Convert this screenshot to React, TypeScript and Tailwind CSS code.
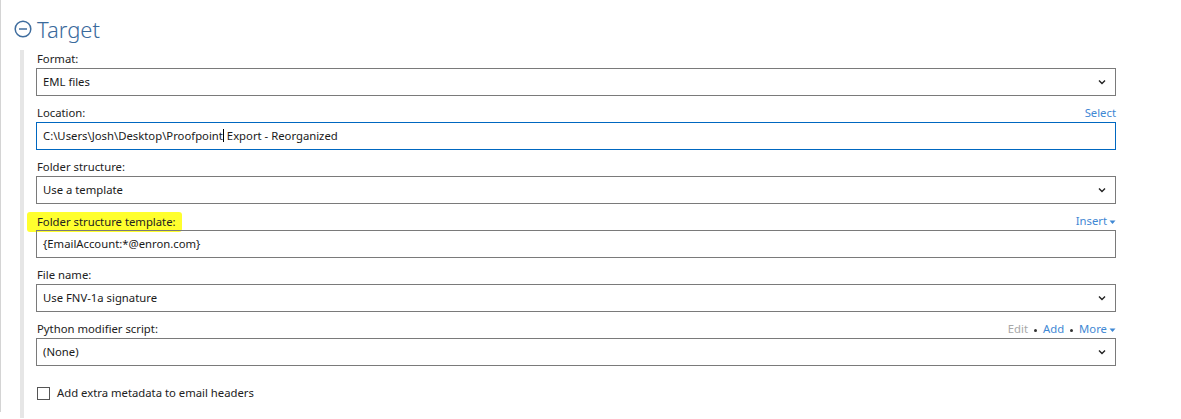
import React from "react";

/* ── Types ── */

type Field = {
  label: string;
  value: string;
  kind: "select" | "text";
  focused?: boolean;
  highlight?: boolean;
  actions?: React.ReactNode;
};

/* ── Small pieces ── */

function Chevron() {
  return (
    <svg width="8" height="6" viewBox="0 0 8 6" className="shrink-0">
      <path d="M1 1.5 L4 4.5 L7 1.5" fill="none" stroke="#222" strokeWidth="1.4" />
    </svg>
  );
}

function Caret() {
  return (
    <svg width="7" height="5" viewBox="0 0 7 5" className="ml-[2px] mt-[2px]">
      <path d="M0.5 0.5 H6.5 L3.5 4 Z" fill="#3f88d4" />
    </svg>
  );
}

function Dot() {
  return <span className="mx-[6px] mt-[1px] h-[3px] w-[3px] rounded-full bg-[#333]" />;
}

/* ── Data ── */

const FIELDS: Field[] = [
  { label: "Format:", value: "EML files", kind: "select" },
  {
    label: "Location:",
    value: "C:\\Users\\Josh\\Desktop\\Proofpoint Export - Reorganized",
    kind: "text",
    focused: true,
    actions: <span className="text-[#3f88d4]">Select</span>,
  },
  { label: "Folder structure:", value: "Use a template", kind: "select" },
  {
    label: "Folder structure template:",
    value: "{EmailAccount:*@enron.com}",
    kind: "text",
    highlight: true,
    actions: (
      <span className="flex items-center text-[#3f88d4]">
        Insert
        <Caret />
      </span>
    ),
  },
  { label: "File name:", value: "Use FNV-1a signature", kind: "select" },
  {
    label: "Python modifier script:",
    value: "(None)",
    kind: "select",
    actions: (
      <span className="flex items-center">
        <span className="text-[#a8a8a8]">Edit</span>
        <Dot />
        <span className="text-[#3f88d4]">Add</span>
        <Dot />
        <span className="text-[#3f88d4]">More</span>
        <Caret />
      </span>
    ),
  },
];

/* ── Field row ── */

function FieldRow({ field }: { field: Field }) {
  return (
    <div className="flex flex-col">
      <div className="flex h-[18px] items-center justify-between pl-[1px] pt-[1px]">
        {field.highlight ? (
          <span className="-ml-[10px] rounded-[3px] bg-[#ffff2e] py-[1px] pl-[10px] pr-[6px] leading-[18px]">
            {field.label}
          </span>
        ) : (
          <span>{field.label}</span>
        )}
        {field.actions}
      </div>
      <div
        className={
          "flex h-[28px] items-center justify-between border pl-[6px] pr-[9px] text-[#1a1a1a] " +
          (field.focused ? "border-[#0067c0]" : "border-[#7a7a7a]")
        }
      >
        <span className="whitespace-pre">
          {field.focused ? (
            <>
              C:\Users\Josh\Desktop\Proofpoint
              <span className="inline-block h-[13px] w-[1px] translate-y-[2px] bg-black" />
              {" Export - Reorganized"}
            </>
          ) : (
            field.value
          )}
        </span>
        {field.kind === "select" && <Chevron />}
      </div>
    </div>
  );
}

/* ── Main ── */

export default function App() {
  return (
    <div
      className="h-[419px] w-[1181px] overflow-hidden bg-white text-[11.3px] text-[#222]"
      style={{ fontFamily: '"Noto Sans", "Open Sans", sans-serif' }}
    >
      <div className="h-[412px] border-l border-[#d4d4d4]">
        {/* Heading */}
        <div className="flex h-[50px] items-center pl-[13px] pt-[7px]">
          <svg width="18" height="18" viewBox="0 0 18 18">
            <circle cx="9" cy="9" r="7.8" fill="none" stroke="#3f6d9e" strokeWidth="1.5" />
            <path d="M5 9 H13" stroke="#3f6d9e" strokeWidth="1.5" />
          </svg>
          <span className="ml-[5px] text-[22px] leading-none font-light text-[#3a6a9c]">
            Target
          </span>
        </div>

        {/* Body */}
        <div className="flex">
          <div className="ml-[19px] w-[4px] bg-[#e6e6e6]" />
          <div className="ml-[12px] flex w-[1080px] flex-col gap-[8px] pb-[16px]">
            {FIELDS.map((f) => (
              <FieldRow key={f.label} field={f} />
            ))}
            <label className="mt-[10px] flex h-[18px] items-center pl-[1px]">
              <span className="h-[13px] w-[13px] border border-[#555]" />
              <span className="ml-[7px]">Add extra metadata to email headers</span>
            </label>
          </div>
        </div>
      </div>
    </div>
  );
}
